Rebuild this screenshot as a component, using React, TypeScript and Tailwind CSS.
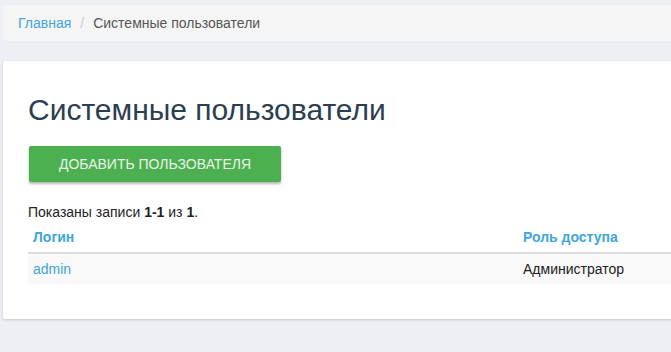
export default function App() {
  return (
    <div
      className="h-[352px] w-[671px] overflow-hidden bg-[#ecf0f5] text-[#333]"
      style={{ fontFamily: '"Liberation Sans", Arial, sans-serif' }}
    >
      <div className="w-[760px] pl-[3px] pt-[5px]">
        {/* Breadcrumb */}
        <div className="flex h-[36px] items-center rounded-[4px] bg-[#f5f5f5] px-[15px] text-[14px]">
          <a className="text-[#3ea6da]">Главная</a>
          <span className="px-[9px] text-[#ccc]">/</span>
          <span className="text-[#555]">Системные пользователи</span>
        </div>

        {/* Card */}
        <div className="mt-[20px] h-[258px] rounded-[2px] bg-white px-[25px] pt-[32px] shadow-[0_1px_3px_rgba(0,0,0,0.18)]">
          <h1 className="text-[30px] leading-[33px] text-[#2c3e50]">Системные пользователи</h1>
          <button className="mt-[20px] ml-[1px] h-[36px] w-[252px] rounded-[2px] bg-[#4caf50] text-[14px] uppercase text-[#e8f5e9] shadow-[0_2px_3px_rgba(0,0,0,0.3)]">
            Добавить пользователя
          </button>
          <div className="mt-[20px] text-[14px] leading-[20px] text-[#222]">
            Показаны записи <b>1-1</b> из <b>1</b>.
          </div>
          <table className="w-[700px] border-collapse text-[14px] leading-[20px]">
            <thead>
              <tr className="border-b-2 border-[#ddd]">
                <th className="w-[490px] px-[5px] py-[5px] text-left font-bold text-[#3ea6da]">Логин</th>
                <th className="px-[5px] py-[5px] text-left font-bold text-[#3ea6da]">Роль доступа</th>
              </tr>
            </thead>
            <tbody>
              <tr className="bg-[#f9f9f9]">
                <td className="px-[5px] py-[5px] text-[#3ea6da]">admin</td>
                <td className="px-[5px] py-[5px] text-[#222]">Администратор</td>
              </tr>
            </tbody>
          </table>
        </div>
      </div>
    </div>
  );
}
